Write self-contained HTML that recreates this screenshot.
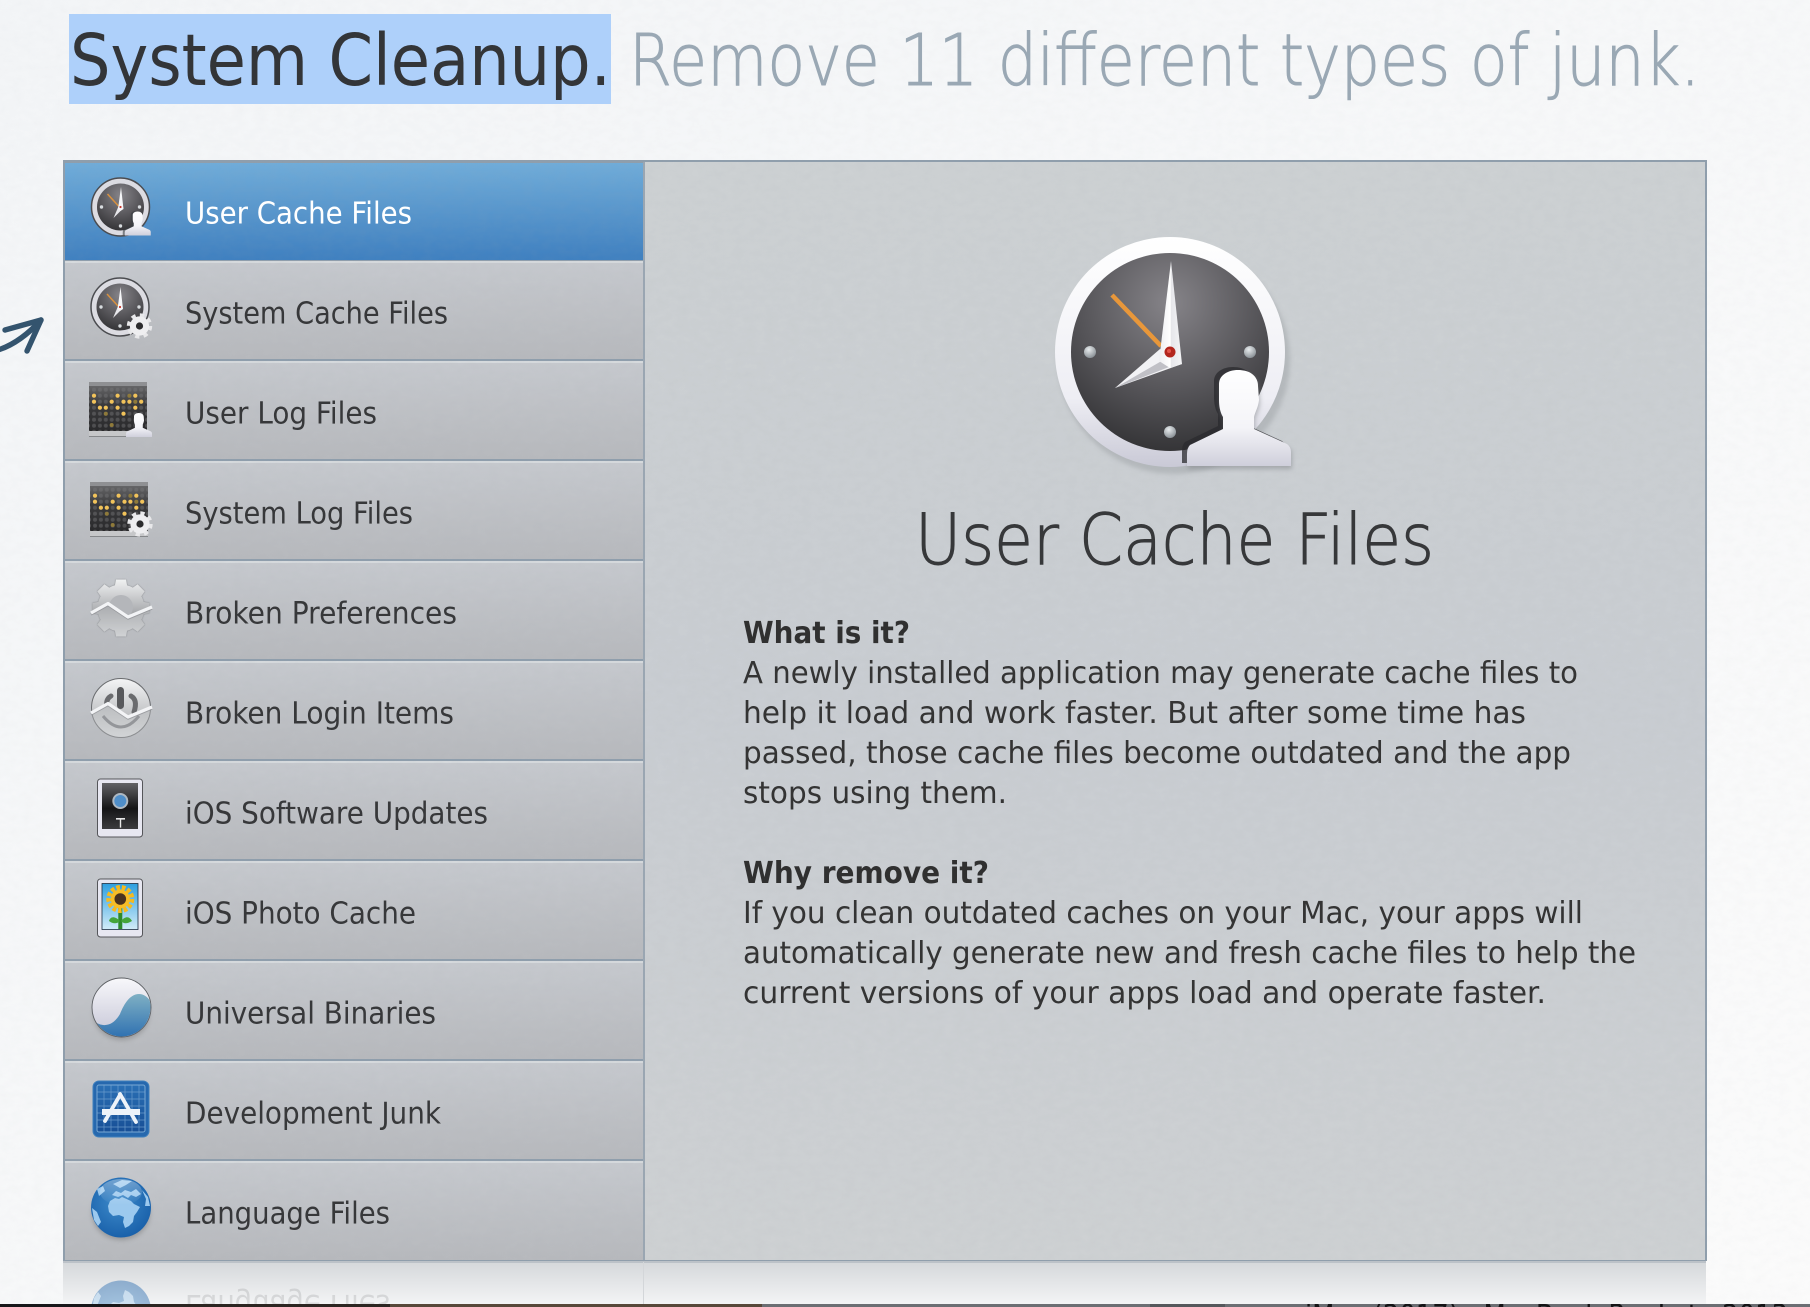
<!DOCTYPE html>
<html lang="en">
<head>
<meta charset="utf-8">
<title>System Cleanup</title>
<style>
html,body{margin:0;padding:0;width:1810px;height:1307px;overflow:hidden;background:#f6f8f9}
svg{display:block}
text{font-family:"DejaVu Sans","Liberation Sans",sans-serif}
.r{font-size:30px;fill:#37383a}
.b{font-size:30px;fill:#343434}
.bb{font-size:30px;font-weight:700;fill:#303030}
</style>
</head>
<body>
<svg width="1810" height="1307" viewBox="0 0 1810 1307" xmlns="http://www.w3.org/2000/svg">
<defs>
<linearGradient id="page" x1="0" y1="0" x2="1" y2="1"><stop offset="0" stop-color="#f3f5f7"/><stop offset="1" stop-color="#fbfbfb"/></linearGradient>
<linearGradient id="row" x1="0" y1="0" x2="0" y2="1"><stop offset="0" stop-color="#c6c9ce"/><stop offset="1" stop-color="#b7b9bd"/></linearGradient>
<linearGradient id="sel" x1="0" y1="0" x2="0" y2="1"><stop offset="0" stop-color="#70acd9"/><stop offset="1" stop-color="#3f80c0"/></linearGradient>
<linearGradient id="refl" x1="0" y1="0" x2="0" y2="1"><stop offset="0" stop-color="#d4d7da"/><stop offset="1" stop-color="#f3f4f5"/></linearGradient>
<linearGradient id="main" x1="0" y1="0" x2="0" y2="1"><stop offset="0" stop-color="#cdd1d3"/><stop offset=".5" stop-color="#c9cdd2"/><stop offset="1" stop-color="#ced1d3"/></linearGradient>
<linearGradient id="rim" x1="0" y1="0" x2="0" y2="1"><stop offset="0" stop-color="#ffffff"/><stop offset=".7" stop-color="#eeeef4"/><stop offset="1" stop-color="#c9c9d6"/></linearGradient>
<radialGradient id="face" cx=".5" cy=".25" r=".85"><stop offset="0" stop-color="#868489"/><stop offset=".55" stop-color="#545357"/><stop offset="1" stop-color="#2a2a2c"/></radialGradient>
<linearGradient id="hand" x1="0" y1="0" x2="1" y2="0"><stop offset="0" stop-color="#eeeef1"/><stop offset=".5" stop-color="#ffffff"/><stop offset=".52" stop-color="#e6e6ea"/><stop offset="1" stop-color="#f4f4f6"/></linearGradient>
<linearGradient id="pers" x1="0" y1="0" x2="0" y2="1"><stop offset="0" stop-color="#ffffff"/><stop offset=".6" stop-color="#f4f4f8"/><stop offset="1" stop-color="#cfcfdb"/></linearGradient>
<radialGradient id="stud" cx=".4" cy=".3" r=".8"><stop offset="0" stop-color="#e8ecee"/><stop offset="1" stop-color="#7e858b"/></radialGradient>
<linearGradient id="board" x1="0" y1="0" x2="0" y2="1"><stop offset="0" stop-color="#6e6e70"/><stop offset=".45" stop-color="#3a3a3c"/><stop offset="1" stop-color="#29292b"/></linearGradient>
<linearGradient id="silver" x1="0" y1="0" x2="0" y2="1"><stop offset="0" stop-color="#f4f5f6"/><stop offset="1" stop-color="#a0a2a5"/></linearGradient>
<linearGradient id="silverlow" x1="0" y1="0" x2="0" y2="1"><stop offset="0" stop-color="#a9abae"/><stop offset="1" stop-color="#d2d4d6"/></linearGradient>
<linearGradient id="ios" x1="0" y1="0" x2="0" y2="1"><stop offset="0" stop-color="#626266"/><stop offset=".55" stop-color="#141416"/><stop offset="1" stop-color="#3c3c3e"/></linearGradient>
<linearGradient id="sky" x1="0" y1="0" x2="0" y2="1"><stop offset="0" stop-color="#2d9fe0"/><stop offset="1" stop-color="#d2ecf8"/></linearGradient>
<linearGradient id="ublue" x1="0" y1="0" x2="0" y2="1"><stop offset="0" stop-color="#7fb0c4"/><stop offset="1" stop-color="#2a6db0"/></linearGradient>
<linearGradient id="uwhite" x1="0" y1="0" x2="0" y2="1"><stop offset="0" stop-color="#f8f8fb"/><stop offset="1" stop-color="#c5c5d6"/></linearGradient>
<radialGradient id="globe" cx=".45" cy=".4" r=".65"><stop offset="0" stop-color="#3e8bcb"/><stop offset="1" stop-color="#175ea8"/></radialGradient>
<linearGradient id="appb" x1="0" y1="0" x2="0" y2="1"><stop offset="0" stop-color="#2a6fb4"/><stop offset="1" stop-color="#174f96"/></linearGradient>
<linearGradient id="glint" x1="0" y1="0" x2="0" y2="1"><stop offset="0" stop-color="#fff" stop-opacity=".35"/><stop offset="1" stop-color="#fff" stop-opacity="0"/></linearGradient>
<filter id="blur" x="-20%" y="-20%" width="140%" height="140%"><feGaussianBlur stdDeviation="2.4"/></filter>
<filter id="soft" x="-10%" y="-10%" width="120%" height="120%"><feGaussianBlur stdDeviation=".35"/></filter>
<filter id="noise" x="0" y="0" width="100%" height="100%"><feTurbulence type="fractalNoise" baseFrequency=".09 .14" numOctaves="3" seed="4"/><feColorMatrix values="0 0 0 0 .35  0 0 0 0 .37  0 0 0 0 .4  0 0 0 .22 -.06"/></filter>
<pattern id="dots" x="2" y="4.700" width="5.900" height="6" patternUnits="userSpaceOnUse"><circle cx="3" cy="3" r="2" fill="#77777a" fill-opacity=".45"/></pattern>

<g id="clock">
  <circle r="115" fill="url(#rim)"/>
  <circle r="99" fill="url(#face)"/>
  <circle cx="-80" cy="0" r="6" fill="url(#stud)"/>
  <circle cx="80" cy="0" r="6" fill="url(#stud)"/>
  <circle cx="0" cy="80" r="6" fill="url(#stud)"/>
  <line x1="-58" y1="-57" x2="-9" y2="-6" stroke="#e8973a" stroke-width="4.5"/>
  <path d="M-55 36 L-10 -3 L12 12 Z" fill="#f2f2f5"/>
  <path d="M-55 36 L-1 15 L12 12 L-5 7Z" fill="#c0c0c6"/>
  <path d="M1 -91 L12 12 L0 16 L-11 9 Z" fill="url(#hand)"/>
  <circle r="5.500" fill="#b3261e"/>
  <circle cx="-1" cy="-1" r="2" fill="#e3544a"/>
</g>
<g id="smallclock">
  <circle r="29" fill="#dcdce2" stroke="#4b4c50" stroke-width="1.500"/>
  <circle r="23.500" fill="url(#face)"/>
  <circle cx="-19" cy="0" r="1.700" fill="#d8dcdf"/>
  <circle cx="19" cy="0" r="1.700" fill="#d8dcdf"/>
  <circle cx="0" cy="19" r="1.700" fill="#d8dcdf"/>
  <line x1="-13" y1="-13" x2="-2" y2="-1" stroke="#d8913f" stroke-width="1.500"/>
  <path d="M-7 11 L-1 -3 L3 1 Z" fill="#e8e8ec"/>
  <path d="M.5 -20 L3 2 L0 4 L-2.500 2 Z" fill="#f6f6f8"/>
  <circle cy="0" r="1.100" fill="#c8332a"/>
</g>
<path id="person" d="M68 18 C80 18 88 24 88 34 L89 48 C88 56 85 60 84 65 L84 77 L117 92 Q121 95 121 100 L121 114 L17 114 L17 102 Q17 96 20 93 L53 77 L53 65 C50 60 49 54 49 48 L49 32 C49 24 57 18 68 18Z"/>
<g id="gear">
  <circle r="10.500" fill="none" stroke="#e8e8ea" stroke-width="4.400" stroke-dasharray="4.100 4.150"/>
  <circle r="9.600" fill="#eeeef0"/>
  <circle r="3.600" fill="#2c2c2e"/>
</g>
<g id="logboard">
  <rect x="0" y="0" width="58" height="50" fill="url(#board)"/>
  <rect x="0" y="4" width="58" height="45" fill="url(#dots)"/>
  <rect x="0" y="0" width="58" height="4" fill="#8f9093"/>
  <rect x="0" y="49" width="58" height="5" fill="#c6c7c9"/>
  <rect x="0" y="54" width="58" height="1" fill="#85878a"/>
  <g fill="#f2c35a">
    <circle cx="5" cy="13.700" r="2.100"/><circle cx="28.600" cy="13.700" r="2.100"/><circle cx="46.300" cy="13.700" r="2.100"/>
    <circle cx="5" cy="19.700" r="2.100"/><circle cx="22.700" cy="19.700" r="2.100"/><circle cx="34.500" cy="19.700" r="2.100"/><circle cx="40.400" cy="19.700" r="2.100"/><circle cx="52.200" cy="19.700" r="2.100"/>
    <circle cx="10.900" cy="25.700" r="2.100"/><circle cx="16.800" cy="25.700" r="2.100"/><circle cx="28.600" cy="25.700" r="2.100"/><circle cx="46.300" cy="25.700" r="2.100"/>
    <circle cx="34.500" cy="31.700" r="2.100"/>
  </g>
  <g fill="#8f7a3a"><circle cx="40.400" cy="13.700" r="2"/><circle cx="46.300" cy="19.700" r="2"/><circle cx="16.800" cy="31.700" r="2"/><circle cx="22.700" cy="43" r="2"/></g>
</g>
<g id="wave" fill="none" stroke-linejoin="round">
  <path d="M91 614.500 L108 605 L128 618.500 L152 608.500" stroke="#8d8f93" stroke-width="2.400" opacity=".7"/>
  <path d="M91 613 L108 603.500 L128 617 L152 607" stroke="#f3f4f6" stroke-width="3.200"/>
</g>
<g id="gearshape">
  <circle cx="121" cy="608" r="23.500"/>
  <g id="t1"><path d="M116 579.500H126L128 590H114Z"/></g>
  <use href="#t1" transform="rotate(45 121 608)"/>
  <use href="#t1" transform="rotate(90 121 608)"/>
  <use href="#t1" transform="rotate(135 121 608)"/>
  <use href="#t1" transform="rotate(180 121 608)"/>
  <use href="#t1" transform="rotate(225 121 608)"/>
  <use href="#t1" transform="rotate(270 121 608)"/>
  <use href="#t1" transform="rotate(315 121 608)"/>
</g>
<mask id="gearmask" maskUnits="userSpaceOnUse" x="85" y="570" width="75" height="76"><use href="#gearshape" fill="#fff"/></mask>
<clipPath id="top1"><path d="M85 570H160V607L128 617L108 603.500L85 616Z"/></clipPath>
<clipPath id="low1"><path d="M85 616L108 603.500L128 617L160 607V645H85Z"/></clipPath>
<clipPath id="top2"><path d="M85 670H160V707L128 717L108 703.500L85 716Z"/></clipPath>
<clipPath id="low2"><path d="M85 716L108 703.500L128 717L160 707V745H85Z"/></clipPath>
<clipPath id="strip"><rect x="0" y="1304" width="1810" height="3"/></clipPath>
<clipPath id="uclip"><circle cx="121.500" cy="1007.500" r="29"/></clipPath>
<clipPath id="gclip"><circle cx="121" cy="1207" r="30"/></clipPath>
<clipPath id="reflclip"><rect x="63" y="1262" width="1643" height="42"/></clipPath>
<g id="globeicon">
  <circle cx="121" cy="1207.500" r="30" fill="url(#globe)"/>
  <g fill="#9cc9ee" clip-path="url(#gclip)">
    <path d="M110 1201L115 1198L119 1199L122 1197L131 1201L134 1204L140 1207L137 1212L134 1216L133 1222L129 1226L125 1228L123 1222L124 1217L119 1215L113 1216L109 1212L108 1206Z"/>
    <path d="M112 1195L116 1191L121 1193L125 1190L131 1192L136 1189L141 1194L136 1197L131 1195L128 1198L123 1195L118 1197Z"/>
    <path d="M113 1184L122 1180L132 1181L126 1185L120 1188Z"/>
    <path d="M142 1190L148 1197L150 1206L145 1206L146 1199Z"/>
    <path d="M92 1208L97 1212L101 1222L98 1226L94 1220Z"/>
    <path d="M97 1189L103 1186L105 1191L99 1196Z"/>
  </g>
  <ellipse cx="121" cy="1192" rx="21" ry="13" fill="url(#glint)"/>
</g>
</defs>

<rect width="1810" height="1307" fill="url(#page)"/>
<rect width="1810" height="1307" filter="url(#noise)" opacity=".28"/>

<!-- headline -->
<rect x="69" y="14" width="542" height="90" fill="#aed0fa"/>
<text x="70" y="85" font-size="71" fill="#333538" textLength="541" lengthAdjust="spacingAndGlyphs">System Cleanup.</text>
<text x="629" y="85" font-size="71" font-weight="200" fill="#9aa8b4" stroke="#9aa8b4" stroke-width=".9" textLength="1071" lengthAdjust="spacingAndGlyphs">Remove 11 different types of junk.</text>

<!-- arrow -->
<g fill="none" stroke="#34546e" stroke-width="5.400" stroke-linecap="round" stroke-linejoin="round">
  <path d="M-2 350 Q20 343 41 320"/>
  <path d="M5 330 L41 320 L27 351"/>
</g>

<!-- panel -->
<rect x="63" y="160" width="1644" height="1101" fill="#8f9eac"/>
<rect x="645" y="162" width="1060" height="1098" fill="url(#main)"/>
<rect x="643" y="162" width="2" height="1098" fill="#9aa6b2"/>

<!-- rows -->
<rect x="65" y="163" width="578" height="97" fill="url(#sel)"/>
<g fill="url(#row)">
  <rect x="65" y="263" width="578" height="96"/>
  <rect x="65" y="363" width="578" height="96"/>
  <rect x="65" y="463" width="578" height="96"/>
  <rect x="65" y="563" width="578" height="96"/>
  <rect x="65" y="663" width="578" height="96"/>
  <rect x="65" y="763" width="578" height="96"/>
  <rect x="65" y="863" width="578" height="96"/>
  <rect x="65" y="963" width="578" height="96"/>
  <rect x="65" y="1063" width="578" height="96"/>
  <rect x="65" y="1163" width="578" height="97"/>
</g>
<g fill="#d6dadd">
  <rect x="65" y="261" width="578" height="2"/>
  <rect x="65" y="361" width="578" height="2"/>
  <rect x="65" y="461" width="578" height="2"/>
  <rect x="65" y="561" width="578" height="2"/>
  <rect x="65" y="661" width="578" height="2"/>
  <rect x="65" y="761" width="578" height="2"/>
  <rect x="65" y="861" width="578" height="2"/>
  <rect x="65" y="961" width="578" height="2"/>
  <rect x="65" y="1061" width="578" height="2"/>
  <rect x="65" y="1161" width="578" height="2"/>
</g>
<rect x="63" y="160" width="1644" height="1101" filter="url(#noise)" opacity=".5"/>

<!-- row labels -->
<g transform="translate(0 .5)">
<text x="185" y="223" font-size="30" fill="#ffffff" textLength="227" lengthAdjust="spacingAndGlyphs">User Cache Files</text>
<text class="r" x="185" y="323" textLength="263" lengthAdjust="spacingAndGlyphs">System Cache Files</text>
<text class="r" x="185" y="423" textLength="192" lengthAdjust="spacingAndGlyphs">User Log Files</text>
<text class="r" x="185" y="523" textLength="228" lengthAdjust="spacingAndGlyphs">System Log Files</text>
<text class="r" x="185" y="623" textLength="272" lengthAdjust="spacingAndGlyphs">Broken Preferences</text>
<text class="r" x="185" y="723" textLength="269" lengthAdjust="spacingAndGlyphs">Broken Login Items</text>
<text class="r" x="185" y="823" textLength="303" lengthAdjust="spacingAndGlyphs">iOS Software Updates</text>
<text class="r" x="185" y="923" textLength="231" lengthAdjust="spacingAndGlyphs">iOS Photo Cache</text>
<text class="r" x="185" y="1023" textLength="251" lengthAdjust="spacingAndGlyphs">Universal Binaries</text>
<text class="r" x="185" y="1123" textLength="256" lengthAdjust="spacingAndGlyphs">Development Junk</text>
<text class="r" x="185" y="1223" textLength="205" lengthAdjust="spacingAndGlyphs">Language Files</text>
</g>

<!-- row icons -->
<use href="#smallclock" transform="translate(120.500 207)"/>
<g transform="translate(120.500 207) scale(.25)">
  <use href="#person" fill="#3a3f45" transform="translate(-8 -2)" opacity=".6"/>
  <use href="#person" fill="url(#pers)"/>
</g>
<use href="#smallclock" transform="translate(120 307)"/>
<use href="#gear" transform="translate(139.500 326)"/>

<use href="#logboard" transform="translate(89 382)"/>
<g transform="translate(121.750 408.500) scale(.25)"><use href="#person" fill="url(#pers)"/></g>
<use href="#logboard" transform="translate(90 482)"/>
<use href="#gear" transform="translate(140 524)"/>

<!-- broken prefs -->
<g style="filter:drop-shadow(0 0 .7px #77797d)">
  <g clip-path="url(#top1)">
    <rect x="85" y="578" width="75" height="38" fill="url(#silver)" mask="url(#gearmask)"/>
    <circle cx="121" cy="607" r="12" fill="#b4b6ba"/>
  </g>
  <g clip-path="url(#low1)">
    <rect x="85" y="604" width="75" height="34" fill="url(#silverlow)" mask="url(#gearmask)"/>
  </g>
</g>
<use href="#wave"/>

<!-- broken login -->
<g clip-path="url(#top2)">
  <circle cx="121" cy="708" r="29.500" fill="url(#silver)" stroke="#696b6e" stroke-width="1"/>
  <rect x="117" y="687" width="7" height="22" rx="3.500" fill="#58595c"/>
  <path d="M108 712 Q104 700 111 696" fill="none" stroke="#6a6b6e" stroke-width="5" stroke-linecap="round"/>
  <path d="M134 712 Q138 700 131 696" fill="none" stroke="#6a6b6e" stroke-width="5" stroke-linecap="round"/>
</g>
<g clip-path="url(#low2)">
  <circle cx="121" cy="708" r="29.500" fill="url(#silverlow)" stroke="#8b8d90" stroke-width="1"/>
  <path d="M103 716 Q121 738 139 716" fill="none" stroke="#94969a" stroke-width="3"/>
</g>
<use href="#wave" transform="translate(0 100)"/>

<!-- iOS device -->
<rect x="97.500" y="779" width="45" height="58" rx="3" fill="#e7e7f1" stroke="#55565a"/>
<rect x="102" y="783" width="36" height="46" fill="url(#ios)"/>
<circle cx="120.300" cy="801" r="8" fill="#aeb8c2"/>
<circle cx="120.300" cy="801" r="6" fill="#4f8ec9"/>
<path d="M116 818h9v1.600h-3.800v8h-1.400v-8H116z" fill="#e8e8e8"/>

<!-- iOS photo -->
<rect x="97.500" y="879" width="45" height="58" rx="3" fill="#e7e7f1" stroke="#55565a"/>
<rect x="102" y="883.500" width="36" height="46" fill="url(#sky)" stroke="#1c2d40" stroke-width=".8"/>
<path d="M120.300 905v24" stroke="#2e8a2a" stroke-width="4"/>
<path d="M120 921C114 915 110 917 109 921C113 924 117 924 120 921ZM121 921C126 915 130 917 132 921C127 924 124 924 121 921Z" fill="#45a53a"/>
<circle cx="120.300" cy="899" r="11" fill="none" stroke="#f6ba1e" stroke-width="6" stroke-dasharray="3.400 1.900"/>
<circle cx="120.300" cy="899" r="9.500" fill="#f7bd27"/>
<circle cx="120.300" cy="899" r="5.800" fill="#4a3320"/>

<!-- universal -->
<ellipse cx="121.500" cy="1014" rx="28" ry="26" fill="#6a6a6a" opacity=".4" filter="url(#blur)"/>
<circle cx="121.500" cy="1007.500" r="29.500" fill="url(#uwhite)" stroke="#5c5f63" stroke-width=".9"/>
<path clip-path="url(#uclip)" d="M90 1018 C100 1028 112 1028 120 1014 C124 1004 130 994 139 994 C145 994 150 999 153 1006 L153 1040 L90 1040Z" fill="url(#ublue)"/>

<!-- app store -->
<rect x="93" y="1081" width="56" height="56" rx="6" fill="#2668ae" stroke="#3f80bd" stroke-width="1"/>
<rect x="97" y="1085" width="48" height="47" rx="2" fill="url(#appb)" stroke="#79a9d4" stroke-width="1"/>
<g stroke="#7aa8d4" stroke-width=".7" opacity=".8">
  <path d="M97 1092H145M97 1099H145M97 1106H145M97 1113H145M97 1120H145M97 1127H145"/>
  <path d="M104 1085V1132M111 1085V1132M118 1085V1132M125 1085V1132M132 1085V1132M139 1085V1132"/>
</g>
<rect x="102" y="1109" width="38" height="6" fill="#edf3f9"/>
<path d="M120 1095L105 1121" stroke="#edf3f9" stroke-width="3.800" stroke-linecap="round"/>
<path d="M120 1094L136 1122" stroke="#edf3f9" stroke-width="3.800" stroke-linecap="round"/>

<!-- globe -->
<ellipse cx="121" cy="1213" rx="29" ry="27" fill="#555" opacity=".35" filter="url(#blur)"/>
<use href="#globeicon"/>

<!-- reflection -->
<rect x="63" y="1261" width="1643" height="43" fill="url(#refl)"/>
<rect x="63" y="1261" width="1643" height="2" fill="#bcc2c8"/>
<rect x="643" y="1262" width="1" height="42" fill="#d3d6d9"/>
<g clip-path="url(#reflclip)">
  <g transform="translate(0 2520) scale(1 -1)">
    <g opacity=".42"><use href="#globeicon" transform="translate(0 2)"/></g>
    <text x="185" y="1225" font-size="30" fill="#37383a" opacity=".13" textLength="205" lengthAdjust="spacingAndGlyphs">Language Files</text>
  </g>
</g>

<!-- main detail -->
<ellipse cx="1174" cy="360" rx="116" ry="114" fill="#8a8f93" opacity=".35" filter="url(#blur)"/>
<g transform="translate(1170 352)">
  <use href="#clock"/>
  <use href="#person" fill="#2b2b2e" transform="translate(-5 -3)" opacity=".75" filter="url(#soft)"/>
  <use href="#person" fill="#7e8185" opacity=".5" transform="translate(1 3)" filter="url(#blur)"/>
  <use href="#person" fill="url(#pers)"/>
</g>

<text x="915" y="564" font-size="70" font-weight="200" fill="#37383a" stroke="#37383a" stroke-width=".9" textLength="519" lengthAdjust="spacingAndGlyphs">User Cache Files</text>

<text class="bb" x="743" y="643" textLength="167" lengthAdjust="spacingAndGlyphs">What is it?</text>
<text class="b" x="743" y="683" textLength="835" lengthAdjust="spacingAndGlyphs">A newly installed application may generate cache files to</text>
<text class="b" x="743" y="723" textLength="783" lengthAdjust="spacingAndGlyphs">help it load and work faster. But after some time has</text>
<text class="b" x="743" y="763" textLength="828" lengthAdjust="spacingAndGlyphs">passed, those cache files become outdated and the app</text>
<text class="b" x="743" y="803" textLength="264" lengthAdjust="spacingAndGlyphs">stops using them.</text>
<text class="bb" x="743" y="883" textLength="246" lengthAdjust="spacingAndGlyphs">Why remove it?</text>
<text class="b" x="743" y="923" textLength="840" lengthAdjust="spacingAndGlyphs">If you clean outdated caches on your Mac, your apps will</text>
<text class="b" x="743" y="963" textLength="893" lengthAdjust="spacingAndGlyphs">automatically generate new and fresh cache files to help the</text>
<text class="b" x="743" y="1003" textLength="803" lengthAdjust="spacingAndGlyphs">current versions of your apps load and operate faster.</text>

<!-- bottom strip -->
<g clip-path="url(#strip)">
  <rect x="0" y="1304" width="1810" height="3" fill="#6b6e73"/>
  <rect x="0" y="1304" width="120" height="3" fill="#17171a"/>
  <rect x="120" y="1304" width="270" height="3" fill="#2c2622"/>
  <rect x="390" y="1304" width="372" height="3" fill="#57483a"/>
  <rect x="1150" y="1304" width="75" height="3" fill="#55585c"/>
  <text x="1305" y="1326" font-size="30" fill="#141416" textLength="483" lengthAdjust="spacingAndGlyphs">iMac (2017) · MacBook Pro Late 2013</text>
</g>
</svg>
</body>
</html>
